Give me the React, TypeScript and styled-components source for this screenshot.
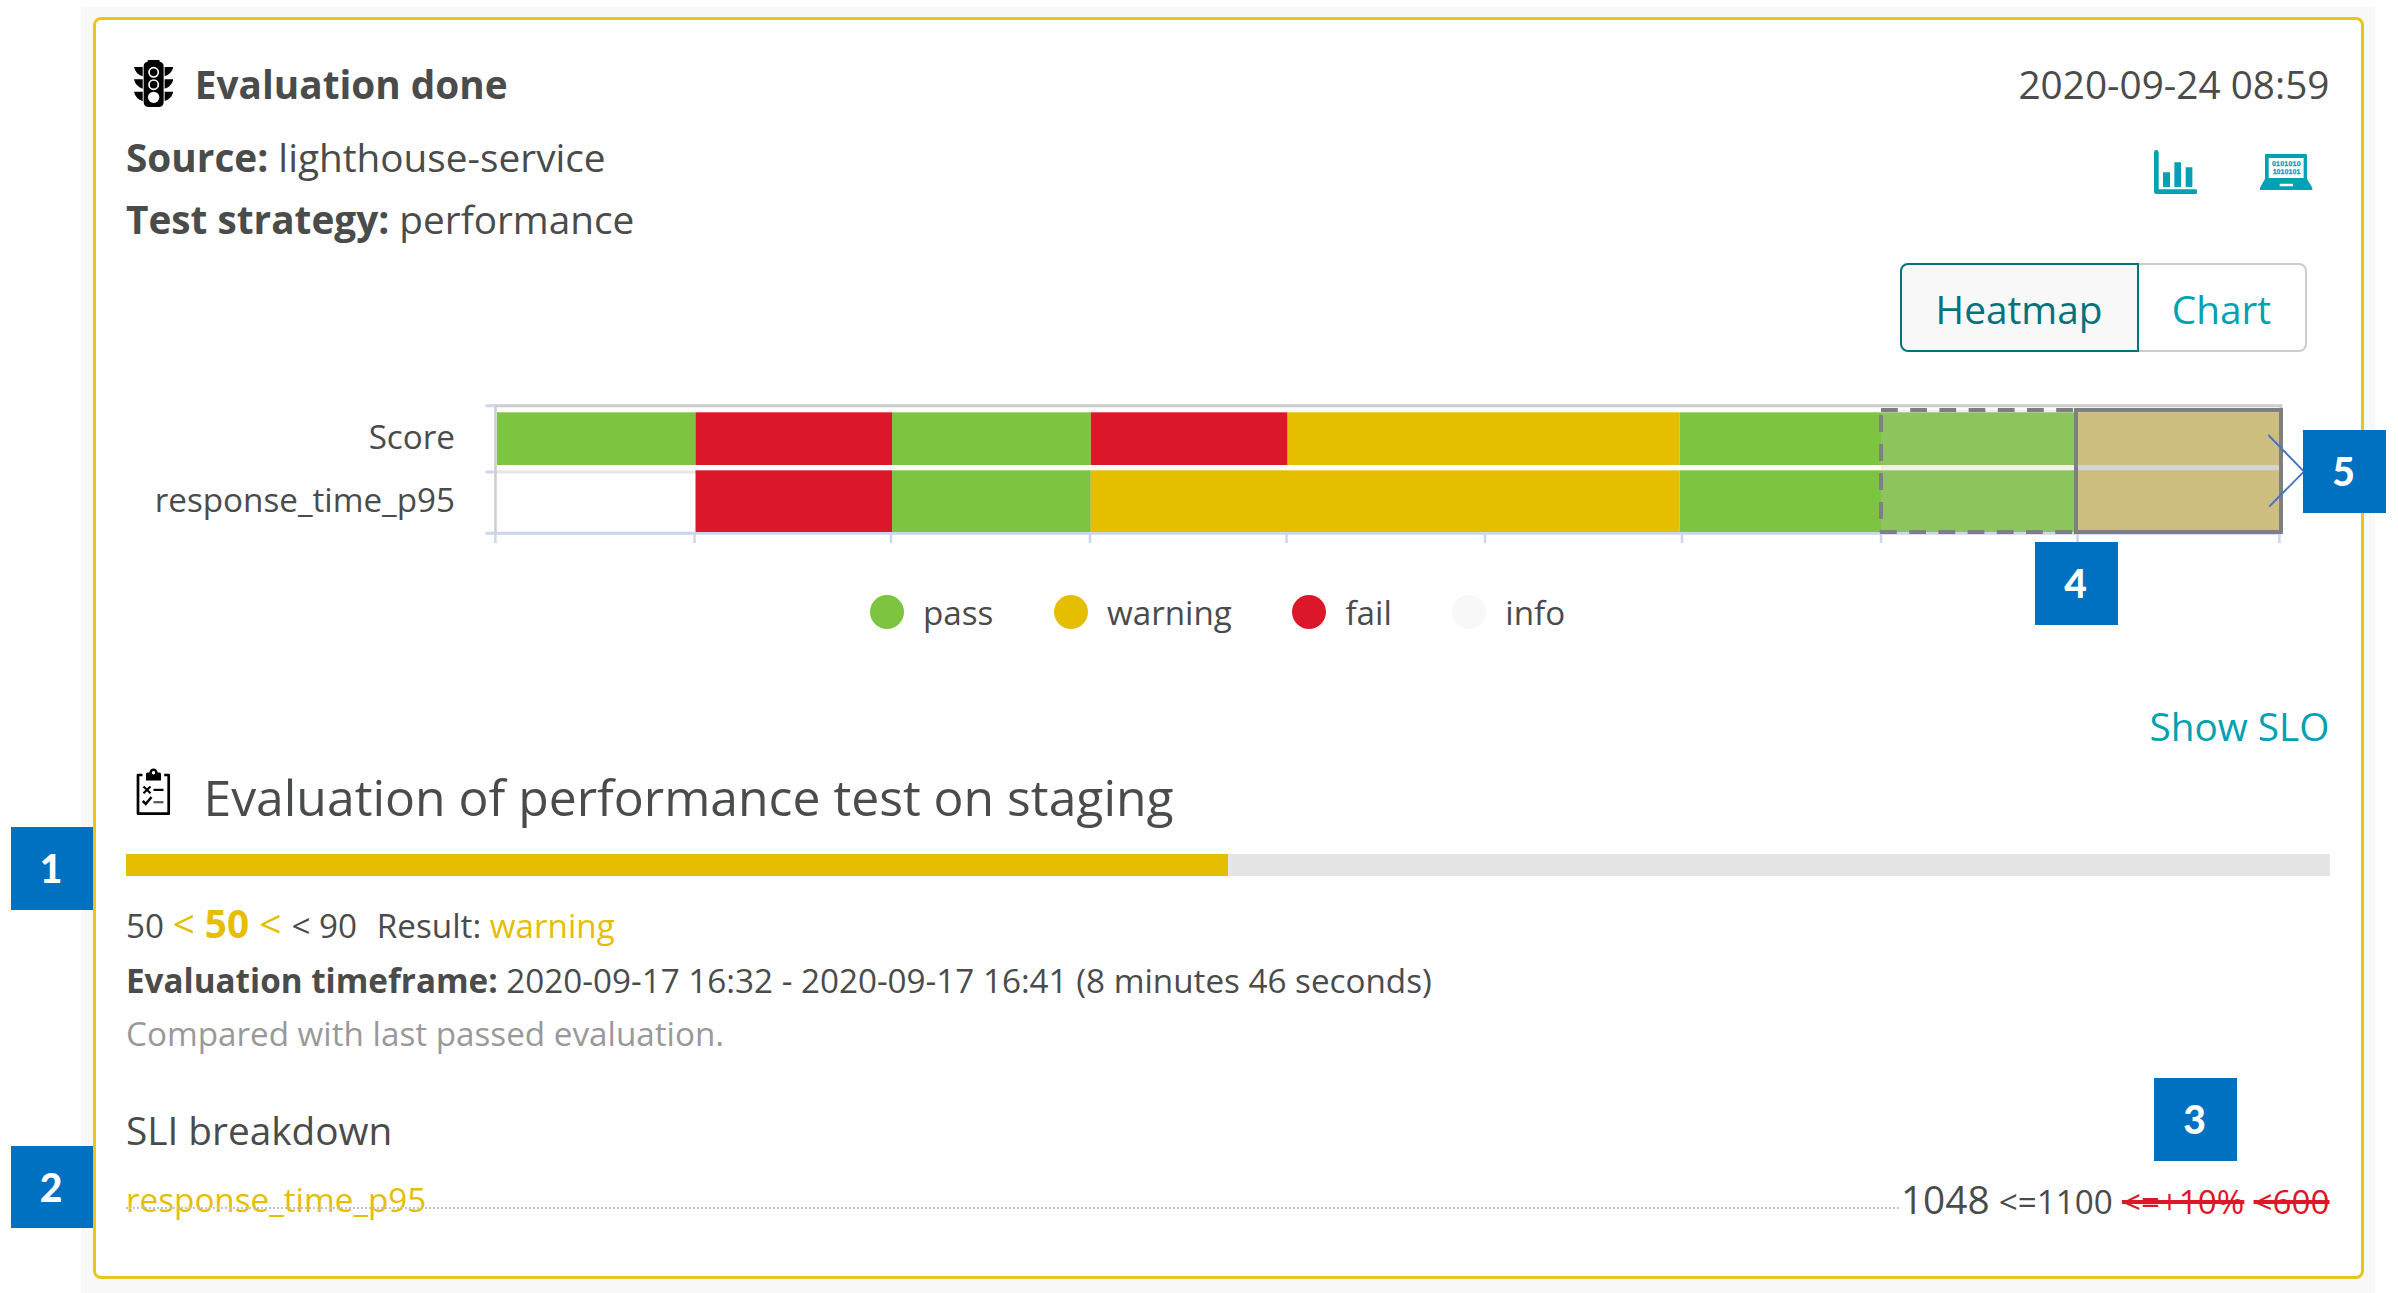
import React from "react";
import styled, { createGlobalStyle } from "styled-components";

const color = {
  text: "#4a4b4b",
  muted: "#999999",
  teal: "#00a1b2",
  tealDark: "#00727b",
  pass: "#7dc540",
  warning: "#e6be00",
  fail: "#dc172a",
  info: "#f8f8f8",
  badge: "#0070c0",
  axis: "#ccd6eb",
  grid: "#cccccc",
};

const size = { small: "33.22px", base: "38.76px", title: "49.85px" };

const GlobalStyle = createGlobalStyle`
  *, *::before, *::after { box-sizing: border-box; }
  body {
    margin: 0;
    background: #ffffff;
    color: ${color.text};
    font-family: "Open Sans", "Noto Sans", sans-serif;
    font-size: ${size.base};
  }
`;

const Page = styled.main`
  position: relative;
  width: 2398px;
  height: 1293px;
  padding: 7px 23px 0 81px;
  overflow: hidden;
`;

const Panel = styled.div`
  height: 1286px;
  padding: 10px 11.5px 14px 12px;
  background: #f8f8f8;
`;

const Card = styled.article`
  display: flex;
  flex-direction: column;
  height: 1262px;
  padding: 34px 31px 0 30px;
  border: 3px solid #e9c61f;
  border-radius: 8px;
  background: #ffffff;
`;

const Header = styled.header`
  display: flex;
  justify-content: space-between;
  height: 60px;
  line-height: 60px;
`;

const Heading = styled.h1`
  display: flex;
  align-items: center;
  gap: 21.5px;
  margin: 0;
  padding-left: 8px;
  font-size: ${size.base};
  font-weight: 700;
`;

const Details = styled.section`
  display: flex;
  justify-content: space-between;
  margin-top: 12px;
  line-height: 62px;
`;

const Detail = styled.div`
  height: 62px;
`;

const Actions = styled.div`
  display: flex;
  align-items: center;
  gap: 63px;
  height: 92px;
  padding-right: 17px;
`;

const Toggle = styled.div`
  display: flex;
  align-self: flex-end;
  height: 89px;
  margin-top: 12.5px;
  margin-right: 23px;
`;

const ToggleButton = styled.button<{ $active?: boolean }>`
  width: ${(p) => (p.$active ? 239 : 168)}px;
  padding: 0;
  border: 2px solid ${(p) => (p.$active ? color.tealDark : "#cccccc")};
  border-left-width: ${(p) => (p.$active ? 2 : 0)}px;
  border-radius: ${(p) => (p.$active ? "8px 0 0 8px" : "0 8px 8px 0")};
  background: ${(p) => (p.$active ? "#f8f8f8" : "#ffffff")};
  color: ${(p) => (p.$active ? color.tealDark : color.teal)};
  font: inherit;
  line-height: 84px;
  padding-top: 2px;
`;

const Chart = styled.section`
  display: flex;
  gap: 25px;
  height: 150px;
  margin-top: 48px;
`;

const ChartLabels = styled.div`
  display: flex;
  flex-direction: column;
  gap: 23px;
  width: 329px;
  padding-top: 16px;
  font-size: ${size.small};
  line-height: 40px;
  text-align: right;
`;

const Plot = styled.svg`
  flex: none;
  display: block;
`;

const Legend = styled.ul`
  display: flex;
  gap: 60.5px;
  margin: 42px 0 0;
  padding: 0 0 0 744px;
  list-style: none;
  font-size: ${size.small};
  line-height: 44px;
`;

const LegendItem = styled.li`
  display: flex;
  align-items: center;
  gap: 19px;
  height: 40px;
`;

const Dot = styled.span<{ $fill: string }>`
  width: 34px;
  height: 34px;
  border-radius: 50%;
  background: ${(p) => p.$fill};
`;

const SloLink = styled.a`
  align-self: flex-end;
  height: 50px;
  margin-top: 69px;
  color: ${color.teal};
  line-height: 50px;
`;

const Title = styled.h2`
  display: flex;
  align-items: center;
  gap: 32.5px;
  height: 60px;
  margin: 16px 0 0;
  padding-left: 10px;
  font-size: ${size.title};
  font-weight: 400;
  line-height: 60px;

  svg {
    margin-top: -10px;
  }
`;

const Progress = styled.div`
  flex: none;
  height: 22.5px;
  margin-top: 27px;
  background: #e5e5e5;
`;

const ProgressFill = styled.div`
  height: 100%;
  background: ${color.warning};
`;

const Line = styled.div<{ $top: number; $muted?: boolean }>`
  height: 40px;
  margin-top: ${(p) => p.$top}px;
  color: ${(p) => (p.$muted ? color.muted : "inherit")};
  font-size: ${size.small};
  line-height: 40px;
  white-space: pre;
`;

const Score = styled.span`
  color: ${color.warning};
  font-size: ${size.base};
`;

const Result = styled.span`
  margin-left: 2.5px;
`;

const Warning = styled.span`
  color: ${color.warning};
`;

const SubTitle = styled.h3`
  height: 50px;
  margin: 51.5px 0 0;
  font-size: ${size.base};
  font-weight: 400;
  line-height: 50px;
`;

const SliRow = styled.div`
  display: flex;
  height: 40px;
  margin-top: 24.5px;
  font-size: ${size.small};
  line-height: 40px;
`;

const SliName = styled.div`
  position: relative;
  flex: 1;
  color: ${color.warning};

  &::after {
    content: "";
    position: absolute;
    top: 28px;
    left: 0;
    right: 0;
    border-top: 2px dotted #c4c4c4;
  }
`;

const SliValues = styled.div`
  display: flex;
  align-items: baseline;
  gap: 9.2px;
  padding-left: 2px;
`;

const Value = styled.span`
  font-size: ${size.base};
`;

const Failed = styled.span`
  color: ${color.fail};
  text-decoration: line-through;
  text-decoration-thickness: 4px;
`;

const Badge = styled.span<{ $x: number; $y: number }>`
  position: absolute;
  left: ${(p) => p.$x}px;
  top: ${(p) => p.$y}px;
  width: ${(p) => (p.$x < 100 ? 82 : 83)}px;
  height: 82.5px;
  padding-right: 2px;
  background: ${color.badge};
  color: #ffffff;
  font-family: Lato, "Open Sans", sans-serif;
  font-size: 39px;
  font-weight: 900;
  line-height: 82px;
  text-align: center;
`;

const TrafficLightIcon = () => (
  <svg width="39.3" height="47.3" viewBox="42 33 118 142">
    <path d="M83 38v-2q0-3 3-3h30q3 0 3 3v2q12 2 12 14v106q0 16-16 16H87q-16 0-16-16V52q0-12 12-14z" />
    {[54, 91, 128].map((y) => (
      <g key={y}>
        <path d={`M42 ${y}h26v28q-21-6-26-28z`} />
        <path d={`M160 ${y}h-26v28q21-6 26-28z`} />
      </g>
    ))}
    <g fill="none" stroke="#fff" strokeWidth="5">
      <circle cx="101" cy="70" r="14" />
      <circle cx="101" cy="107" r="14" />
    </g>
    <circle cx="101" cy="145" r="17" fill="#fff" />
  </svg>
);

const ClipboardIcon = () => (
  <svg width="35" height="48" viewBox="136 768.5 35 48" fill="none" stroke="#000">
    <path d="M142.5 775.5H138v38.7h30.7v-38.7h-4.5" strokeWidth="2.7" strokeLinejoin="round" />
    <path
      d="M146 781v-6.5q0-1.6 1.6-1.6h1.700q.8-4 4.200-4t4.200 4h1.700q1.600 0 1.600 1.600v6.500z M153.500 771.500a1.700 1.700 0 1 0 .01 0z"
      fill="#000"
      fillRule="evenodd"
      stroke="none"
    />
    <path d="M143.500 787l7 6.800m0-6.800l-7 6.800" strokeWidth="2.200" />
    <path d="M153.500 790.400h10" strokeWidth="2.200" />
    <path d="M142.800 801.500l3 3 5.700-7" strokeWidth="2.500" />
    <path d="M153.500 802.700h10" stroke="#555" strokeWidth="2.200" />
  </svg>
);

const BarChartIcon = () => (
  <svg width="43.7" height="44" viewBox="70 60 131 132" fill={color.teal}>
    <path d="M77 67v118h117" fill="none" stroke={color.teal} strokeWidth="14" strokeLinecap="round" strokeLinejoin="round" />
    <path d="M97 127h21v44H97zM131 97h20v74h-20zM165 112h20v59h-20z" />
  </svg>
);

const LaptopIcon = () => (
  <svg width="52.3" height="36.7" viewBox="389 71 157 110" fill={color.teal}>
    <path
      fillRule="evenodd"
      d="M408 71h118q4 0 4 4v70l16 27v6q0 3-3 3H392q-3 0-3-3v-6l15-27V75q0-4 4-4zM415 83v60h105V83zM448 160v8h40v-8z"
    />
    <g
      fontFamily="Liberation Sans, sans-serif"
      fontWeight="700"
      fontSize="21"
      textRendering="geometricPrecision"
      stroke={color.teal}
      strokeWidth="0.8"
    >
      <text x="425" y="107" textLength="86">0101010</text>
      <text x="427" y="132" textLength="83">1010101</text>
    </g>
  </svg>
);

const ticks = [495.4, 694.5, 891, 1090, 1286.5, 1485, 1682, 1881, 2077.6, 2279.4];

type Cell = [from: number, to: number, fill: string];

const scoreCells: Cell[] = [
  [497, 695.5, color.pass],
  [695.5, 892, color.fail],
  [892, 1090.8, color.pass],
  [1090.8, 1287.6, color.fail],
  [1287.6, 1679.5, color.warning],
  [1679.5, 2076, color.pass],
];

const responseCells: Cell[] = [
  [695.5, 892, color.fail],
  [892, 1090.8, color.pass],
  [1090.8, 1679.5, color.warning],
  [1679.5, 2076, color.pass],
];

const Heatmap = () => (
  <Plot width="1840" height="150" viewBox="480 400 1840 150">
    <path d="M495 405.7H2281V412" fill="none" stroke={color.grid} strokeWidth="3" />
    <path d="M495 472H696" stroke="#e6e6e6" strokeWidth="3" />
    <path d="M495.5 406V533" stroke={color.grid} strokeWidth="2.5" />
    <path d="M485.5 405.7h10M485.5 472h10M485.5 533.2H2281" stroke={color.axis} strokeWidth="3" />
    {ticks.map((x) => (
      <path key={x} d={`M${x} 533v10`} stroke={color.axis} strokeWidth="2.5" />
    ))}
    {scoreCells.map(([from, to, fill]) => (
      <rect key={from} x={from} y="412.3" width={to - from} height="52.7" fill={fill} />
    ))}
    {responseCells.map(([from, to, fill]) => (
      <rect key={from} x={from} y="470.3" width={to - from} height="61.7" fill={fill} />
    ))}
    <rect x="1881" y="410" width="195" height="122" fill="#bfbfbf" fillOpacity="0.24" />
    <rect x="2076" y="410" width="205" height="122" fill="#d4d4d4" />
    <rect x="2078" y="412.3" width="201" height="52.7" fill="#cdbe7f" />
    <rect x="2078" y="470.3" width="201" height="61.7" fill="#cdbe7f" />
    <g stroke="#7f7f7f" strokeWidth="4" fill="none">
      <path d="M1881 410H2076M1880 532H2076" strokeDasharray="16.8 12.4" />
      <path d="M1881 415V532" strokeDasharray="17 12" />
      <rect x="2076" y="410" width="205" height="122" />
    </g>
    <path d="M2268.3 435L2304 471.5L2269.3 506.5" fill="none" stroke="#4472c4" strokeWidth="1.8" />
  </Plot>
);

const legend: [string, string][] = [
  ["pass", color.pass],
  ["warning", color.warning],
  ["fail", color.fail],
  ["info", color.info],
];

const badges = [
  { label: "1", x: 11, y: 827 },
  { label: "2", x: 11, y: 1145.5 },
  { label: "3", x: 2154, y: 1078 },
  { label: "4", x: 2035, y: 542 },
  { label: "5", x: 2303, y: 430 },
];

const score = 50;

export default function App() {
  return (
    <Page>
      <GlobalStyle />
      <Panel>
        <Card>
          <Header>
            <Heading>
              <TrafficLightIcon />
              Evaluation done
            </Heading>
            <time>2020-09-24 08:59</time>
          </Header>
          <Details>
            <div>
              <Detail>
                <b>Source:</b> lighthouse-service
              </Detail>
              <Detail>
                <b>Test strategy:</b> performance
              </Detail>
            </div>
            <Actions>
              <BarChartIcon />
              <LaptopIcon />
            </Actions>
          </Details>
          <Toggle>
            <ToggleButton $active>Heatmap</ToggleButton>
            <ToggleButton>Chart</ToggleButton>
          </Toggle>
          <Chart>
            <ChartLabels>
              <span>Score</span>
              <span>response_time_p95</span>
            </ChartLabels>
            <Heatmap />
          </Chart>
          <Legend>
            {legend.map(([label, fill]) => (
              <LegendItem key={label}>
                <Dot $fill={fill} />
                {label}
              </LegendItem>
            ))}
          </Legend>
          <SloLink>Show SLO</SloLink>
          <Title>
            <ClipboardIcon />
            Evaluation of performance test on staging
          </Title>
          <Progress>
            <ProgressFill style={{ width: `${score}%` }} />
          </Progress>
          <Line $top={27}>
            50 <Score>{"< "}<b>{score}</b>{" < "}</Score>{"< 90  "}
            <Result>
              {"Result: "}
              <Warning>warning</Warning>
            </Result>
          </Line>
          <Line $top={17}>
            <b>Evaluation timeframe:</b> 2020-09-17 16:32 - 2020-09-17 16:41 (8 minutes 46 seconds)
          </Line>
          <Line $top={13} $muted>
            Compared with last passed evaluation.
          </Line>
          <SubTitle>SLI breakdown</SubTitle>
          <SliRow>
            <SliName>response_time_p95</SliName>
            <SliValues>
              <Value>1048</Value>
              <span>&lt;=1100</span>
              <Failed>&lt;=+10%</Failed>
              <Failed>&lt;600</Failed>
            </SliValues>
          </SliRow>
        </Card>
      </Panel>
      {badges.map((b) => (
        <Badge key={b.label} $x={b.x} $y={b.y}>
          {b.label}
        </Badge>
      ))}
    </Page>
  );
}
